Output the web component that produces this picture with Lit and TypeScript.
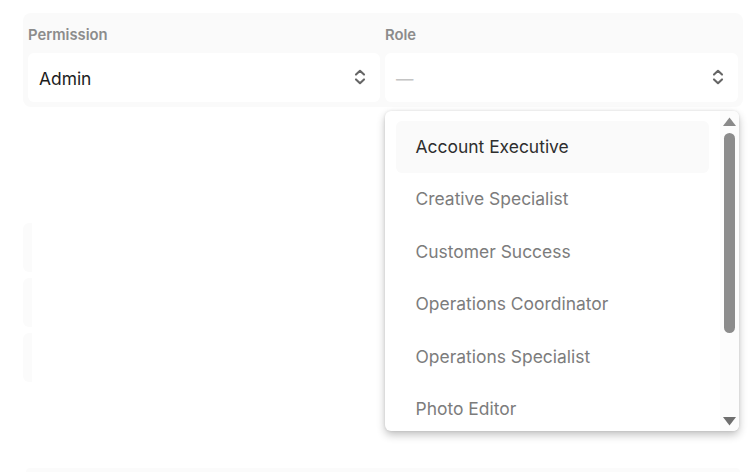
import { LitElement, html, css, svg } from "lit";
import { customElement } from "lit/decorators.js";

const chevrons = svg`<path d="M2 5.6 6 1.8l4 3.8M2 10.4 6 14.2l4-3.8" fill="none" stroke="currentColor" stroke-width="2.1" stroke-linecap="round" stroke-linejoin="round"/>`;

const roles = [
  "Account Executive",
  "Creative Specialist",
  "Customer Success",
  "Operations Coordinator",
  "Operations Specialist",
  "Photo Editor",
];

@customElement("app-root")
export class AppRoot extends LitElement {
  static styles = css`
    :host {
      display: block;
      position: relative;
      width: 754px;
      height: 472px;
      overflow: hidden;
      background: #fff;
      font-family: Inter, "Liberation Sans", sans-serif;
    }
    .page {
      box-sizing: border-box;
      height: 472px;
      padding: 13px 11px 0 23px;
      display: flex;
      flex-direction: column;
    }
    .panel {
      display: grid;
      grid-template-columns: 352px 353px;
      column-gap: 5px;
      height: 94px;
      box-sizing: border-box;
      padding: 13px 5px 5px;
      background: #fafafa;
      border-radius: 8px;
    }
    .field {
      display: flex;
      flex-direction: column;
      gap: 9px;
    }
    .label {
      font-size: 14.8px;
      line-height: 18px;
      font-weight: 600;
      color: #8c8c8c;
    }
    .select {
      height: 49px;
      box-sizing: border-box;
      padding: 1px 14px 0 11px;
      display: flex;
      align-items: center;
      justify-content: space-between;
      background: #fff;
      border-radius: 6px;
      font-size: 17.4px;
      color: #1c1c1c;
    }
    .placeholder { color: #c4c4c4; }
    .chev { width: 12px; height: 16px; color: #666; margin-top: -2px; }
    .rows {
      display: flex;
      flex-direction: column;
      gap: 6px;
      margin-top: 116px;
    }
    .row {
      width: 9px;
      height: 49px;
      background: #fbfbfb;
      border-radius: 6px 0 0 6px;
    }
    .foot {
      margin: 86px 3px 0;
      height: 8px;
      background: #fbfbfb;
      border-radius: 6px 6px 0 0;
    }
    .menu {
      position: absolute;
      left: 385px;
      top: 111px;
      width: 354px;
      height: 320px;
      box-sizing: border-box;
      padding: 10px 30px 0 11px;
      display: flex;
      flex-direction: column;
      gap: 0.5px;
      background: #fff;
      border-radius: 6px;
      box-shadow: 0 4px 9px rgba(0,0,0,.24), 0 0 3px rgba(0,0,0,.1);
      overflow: hidden;
    }
    .item {
      height: 52px;
      box-sizing: border-box;
      padding: 0 0 2px 19.5px;
      display: flex;
      align-items: center;
      font-size: 17.45px;
      color: #7c7c7c;
      border-radius: 6px;
      flex: none;
    }
    .item.active {
      background: #fafafa;
      color: #2e2e2e;
    }
    .track {
      position: absolute;
      right: 0;
      top: 0;
      bottom: 0;
      width: 19px;
      background: #fcfcfc;
    }
    .arrow {
      position: absolute;
      left: 3px;
      width: 13px;
      height: 9px;
      fill: #8a8a8a;
    }
    .arrow.up { top: 6px; }
    .arrow.down { bottom: 5px; fill: #6f6f6f; }
    .thumb {
      position: absolute;
      left: 4px;
      top: 22px;
      width: 11px;
      height: 200px;
      background: #8c8c8c;
      border-radius: 6px;
    }
  `;

  render() {
    return html`
      <div class="page">
        <div class="panel">
          <div class="field">
            <div class="label">Permission</div>
            <div class="select">
              <span>Admin</span>
              <svg class="chev" viewBox="0 0 12 16">${chevrons}</svg>
            </div>
          </div>
          <div class="field">
            <div class="label">Role</div>
            <div class="select">
              <span class="placeholder">—</span>
              <svg class="chev" viewBox="0 0 12 16">${chevrons}</svg>
            </div>
          </div>
        </div>
        <div class="rows">
          <div class="row"></div>
          <div class="row"></div>
          <div class="row"></div>
        </div>
        <div class="foot"></div>
      </div>
      <div class="menu">
        ${roles.map(
          (r, i) => html`<div class="item ${i === 0 ? "active" : ""}">${r}</div>`
        )}
        <div class="track">
          <svg class="arrow up" viewBox="0 0 13 9"><path d="M6.5 0.5 13 9H0z"/></svg>
          <div class="thumb"></div>
          <svg class="arrow down" viewBox="0 0 13 9"><path d="M0 0h13L6.5 8.5z"/></svg>
        </div>
      </div>
    `;
  }
}
